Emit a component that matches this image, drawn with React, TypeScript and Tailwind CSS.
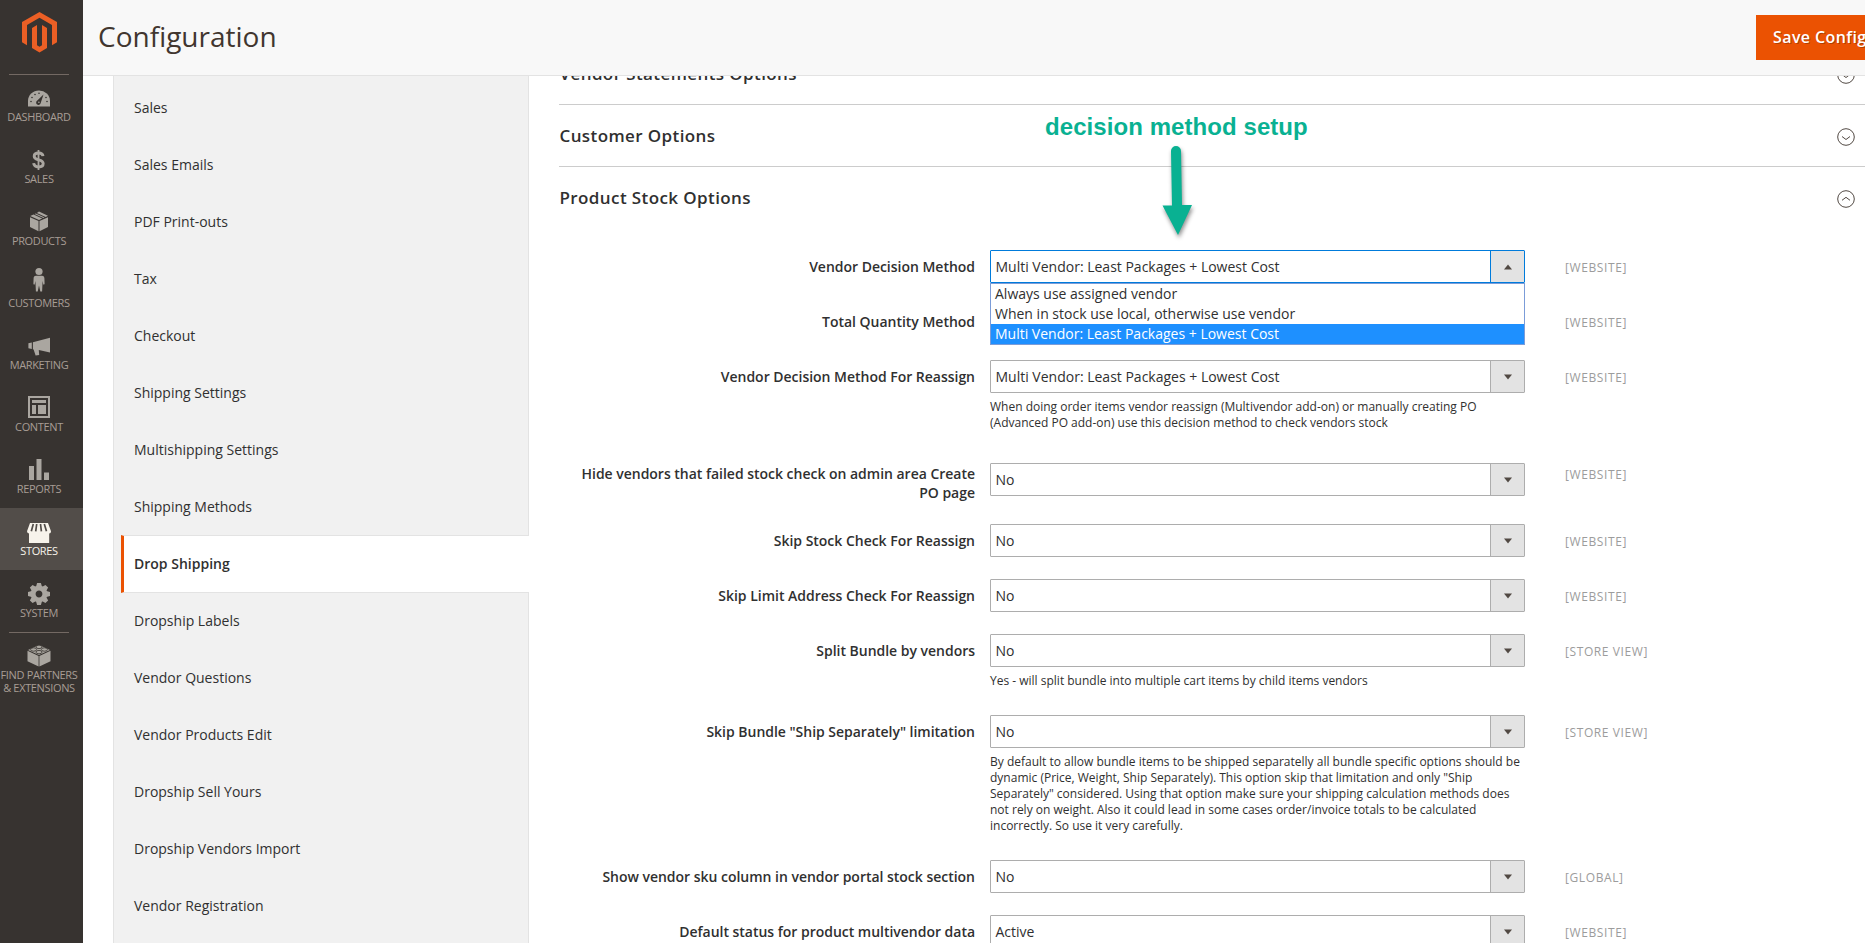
import { useState } from 'react'
import type { ReactNode } from 'react'
import { clsx } from 'clsx'

interface MenuItem {
  id: string
  label: ReactNode
  icon: ReactNode
}

interface Field {
  label: string
  value: string
  scope: string
  note?: string
  options?: string[]
}

const MENU: MenuItem[] = [
  {
    id: 'dashboard',
    label: 'Dashboard',
    icon: (
      <svg width="22" height="18" viewBox="0 2 22 18" fill="currentColor">
        <path d="M0 18.500V13a11 10.500 0 0 1 22 0v5.500z" />
        <g className="fill-[#373330]">
          <circle cx="3" cy="13.500" r=".8" />
          <circle cx="4" cy="9.500" r=".8" />
          <circle cx="7" cy="6.500" r=".8" />
          <circle cx="11" cy="5.300" r=".8" />
          <circle cx="18" cy="9.500" r=".8" />
          <circle cx="19" cy="13.500" r=".8" />
          <path d="M15.500 6.500 9.300 12.600a2.300 2.300 0 1 0 3.400 2.400z" />
        </g>
        <circle cx="10.900" cy="14.200" r=".8" />
      </svg>
    ),
  },
  {
    id: 'sales',
    label: 'Sales',
    icon: (
      <svg width="14" height="22" viewBox="0 0 14 22" fill="none" stroke="currentColor" className="-mt-0.5">
        <path d="M6.500 1v20" strokeWidth="1.800" />
        <path
          d="M11 7.200C10.800 5 9.200 4 6.600 4 4 4 2.200 5.200 2.200 7.200c0 2.300 2 3 4.500 3.600 2.700.6 4.500 1.400 4.500 3.800 0 2.200-2 3.400-4.600 3.400-2.800 0-4.700-1.200-4.900-3.800"
          strokeWidth="2.900"
        />
      </svg>
    ),
  },
  {
    id: 'products',
    label: 'Products',
    icon: (
      <svg width="20" height="21" viewBox="0 0 20 21" fill="currentColor" className="-mt-0.5">
        <path d="M1 6.200 9.500 10v10.300L1 16zM19 6.200 10.500 10v10.300L19 16z" />
        <path d="M1.200 5.100 4.600 3.500 13.200 7.600 10 9.100zM5.600 3 6.800 2.400 15.500 6.500 14.300 7.100zM7.900 1.900 10 .5l8.900 4.300-2.200 1.100z" />
      </svg>
    ),
  },
  {
    id: 'customers',
    label: 'Customers',
    icon: (
      <svg width="12" height="26" viewBox="0 0 12 26" fill="currentColor" className="-mt-2.5">
        <circle cx="6" cy="4.500" r="3.600" />
        <path d="M3 8.800h6c1.700 0 2.300 1 2.400 2.400l.2 5.600c0 1-1.200 1.200-1.400.1l-.6-3-.5 10.700H7.300L6 18.500l-1.300 6.100H2.900L2.400 13.900l-.6 3c-.2 1.100-1.500.9-1.400-.1l.2-5.600C.7 9.800 1.300 8.800 3 8.800z" />
      </svg>
    ),
  },
  {
    id: 'marketing',
    label: 'Marketing',
    icon: (
      <svg width="22" height="19" viewBox="0 0 22 19" fill="currentColor">
        <path d="M4.900 5.300 22 .7v14.900l-11.200-2.700.4 5-3.600.7-2-6-.7-.3zM.4 6.300 3.800 5.600V12L.4 11.200z" />
      </svg>
    ),
  },
  {
    id: 'content',
    label: 'Content',
    icon: (
      <svg width="22" height="22" viewBox="0 0 22 22" fill="currentColor" className="-mt-[3px]">
        <path d="M0 0h22v22H0zM2 2v18h18V2z" fillRule="evenodd" />
        <path d="M4 4h14v3H4zM4 9h4v9H4zM10 9h8v9h-8z" />
      </svg>
    ),
  },
  {
    id: 'reports',
    label: 'Reports',
    icon: (
      <svg width="20" height="21" viewBox="0 0 20 21" fill="currentColor" className="-mt-0.5">
        <path d="M0 7h5v14H0zM7.500 0h5v21h-5zM15 13.500h5V21h-5z" />
      </svg>
    ),
  },
  {
    id: 'stores',
    label: 'Stores',
    icon: (
      <svg width="24" height="20" viewBox="0 0 24 20" fill="currentColor">
        <path d="M3 0h18l3 8.200a2.300 2.300 0 0 1-1.800 2.300V20H2V10.500A2.300 2.300 0 0 1 0 8.200z" />
        <path
          d="M6.300 1 4.300 8.300M9.700 1 8.700 8.300M13.500 1l.9 7.300M17.300 1l2.200 7.300"
          className="stroke-[#524d49]"
          strokeWidth="1.700"
          fill="none"
        />
      </svg>
    ),
  },
  {
    id: 'system',
    label: 'System',
    icon: (
      <svg width="22" height="22" viewBox="-11 -11 22 22" className="-mt-0.5">
        <circle r="5.800" fill="none" stroke="currentColor" strokeWidth="4.800" />
        <g fill="currentColor">
          {[0, 45, 90, 135, 180, 225, 270, 315].map((angle) => (
            <path key={angle} d="M-3.200-6.500-1.900-11h3.800l1.300 4.500z" transform={`rotate(${angle})`} />
          ))}
        </g>
      </svg>
    ),
  },
  {
    id: 'partners',
    label: (
      <>
        Find Partners
        <br />
        &amp; Extensions
      </>
    ),
    icon: (
      <svg width="24" height="23" viewBox="0 0 24 23" fill="currentColor" className="-mt-0.5">
        <path d="M.5 6.800 11.600 12v10.500L.5 17.300zM23.500 6.800 12.400 12v10.500l11.100-5.200zM1 6 12 1l11 5-11 5z" />
        <g className="stroke-[#373330]" strokeWidth=".8">
          <ellipse cx="12" cy="2.900" rx="3" ry="1.700" />
          <ellipse cx="6.600" cy="5.500" rx="3" ry="1.700" />
          <ellipse cx="17.400" cy="5.500" rx="3" ry="1.700" />
          <ellipse cx="12" cy="8.100" rx="3" ry="1.700" />
        </g>
      </svg>
    ),
  },
]

const TABS = [
  'Sales',
  'Sales Emails',
  'PDF Print-outs',
  'Tax',
  'Checkout',
  'Shipping Settings',
  'Multishipping Settings',
  'Shipping Methods',
  'Drop Shipping',
  'Dropship Labels',
  'Vendor Questions',
  'Vendor Products Edit',
  'Dropship Sell Yours',
  'Dropship Vendors Import',
  'Vendor Registration',
]

const LEAST_PACKAGES = 'Multi Vendor: Least Packages + Lowest Cost'

const FIELDS: Field[] = [
  {
    label: 'Vendor Decision Method',
    value: LEAST_PACKAGES,
    scope: '[WEBSITE]',
    options: ['Always use assigned vendor', 'When in stock use local, otherwise use vendor', LEAST_PACKAGES],
  },
  { label: 'Total Quantity Method', value: '', scope: '[WEBSITE]' },
  {
    label: 'Vendor Decision Method For Reassign',
    value: LEAST_PACKAGES,
    scope: '[WEBSITE]',
    note: 'When doing order items vendor reassign (Multivendor add-on) or manually creating PO (Advanced PO add-on) use this decision method to check vendors stock',
  },
  { label: 'Hide vendors that failed stock check on admin area Create PO page', value: 'No', scope: '[WEBSITE]' },
  { label: 'Skip Stock Check For Reassign', value: 'No', scope: '[WEBSITE]' },
  { label: 'Skip Limit Address Check For Reassign', value: 'No', scope: '[WEBSITE]' },
  {
    label: 'Split Bundle by vendors',
    value: 'No',
    scope: '[STORE VIEW]',
    note: 'Yes - will split bundle into multiple cart items by child items vendors',
  },
  {
    label: 'Skip Bundle "Ship Separately" limitation',
    value: 'No',
    scope: '[STORE VIEW]',
    note: 'By default to allow bundle items to be shipped separatelly all bundle specific options should be dynamic (Price, Weight, Ship Separately). This option skip that limitation and only "Ship Separately" considered. Using that option make sure your shipping calculation methods does not rely on weight. Also it could lead in some cases order/invoice totals to be calculated incorrectly. So use it very carefully.',
  },
  { label: 'Show vendor sku column in vendor portal stock section', value: 'No', scope: '[GLOBAL]' },
  { label: 'Default status for product multivendor data', value: 'Active', scope: '[WEBSITE]' },
]

function Sidebar() {
  return (
    <aside className="w-[83px] shrink-0 bg-[#373330]">
      <div className="flex h-[74px] w-[79px] justify-center pt-[11.5px]">
        <svg width="35" height="41" viewBox="0 0 35 41" className="fill-[#eb5f25]">
          <path d="M17.500 0 35 10.100v20.200l-5 2.900V13L17.500 5.800 5 13v20.200l-5-2.900V10.100z" />
          <path d="M10 15.900 15 13v20.200l2.500 1.500 2.500-1.500V13l5 2.900v20.200l-7.500 4.400-7.500-4.400z" />
        </svg>
      </div>
      <nav>
        {MENU.map((item) => {
          const active = item.id === 'stores'
          return (
            <a
              key={item.id}
              className={clsx(
                'relative flex h-[62px] w-full flex-col pr-[5px]',
                active ? 'bg-[#524d49] text-[#f7f3eb]' : 'text-[#aaa6a0]',
              )}
            >
              {(item.id === 'dashboard' || item.id === 'partners') && (
                <span className="absolute top-0 left-[9px] h-px w-[60px] bg-[#736963]" />
              )}
              <span className="flex h-[36px] items-center justify-center pt-[13px]">{item.icon}</span>
              <span
                className={clsx(
                  'text-center text-[11px] leading-[13px] tracking-[-0.35px] whitespace-nowrap uppercase',
                  active ? 'text-[#f7f3eb]' : 'text-[#a79d95]',
                )}
              >
                {item.label}
              </span>
            </a>
          )
        })}
      </nav>
    </aside>
  )
}

function ConfigTabs() {
  return (
    <ul className="h-[867px] w-[416px] shrink-0 border-x border-[#e3e3e3] bg-[#f1f1f1] pt-[3px]">
      {TABS.map((tab) => (
        <li
          key={tab}
          className={clsx(
            '-mb-px flex h-[58px] items-center border-y pb-0.5 pl-[10px] text-[14px]',
            tab === 'Drop Shipping'
              ? 'relative -mr-px ml-[7px] border-l-[3px] border-y-[#e3e3e3] border-l-[#eb5202] bg-white font-semibold'
              : 'ml-[10px] border-transparent',
          )}
        >
          {tab}
        </li>
      ))}
    </ul>
  )
}

function SectionHeader({ title, open = false }: { title: string; open?: boolean }) {
  return (
    <div className={clsx('flex h-[62px] items-center border-b pr-[33px] pl-[0.5px]', open ? 'border-transparent' : 'border-[#cccccc]')}>
      <h2 className="text-[17px] font-semibold tracking-[0.4px]">{title}</h2>
      <svg width="18" height="18" viewBox="0 0 18 18" fill="none" stroke="#514943" className="mt-0.5 ml-auto">
        <circle cx="9" cy="9" r="8.300" />
        <path d={open ? 'M5 10.300 9 7.300l4 3' : 'M5 8.500 9 11.500l4-3'} />
      </svg>
    </div>
  )
}

function Select({ field }: { field: Field }) {
  const [open, setOpen] = useState(Boolean(field.options))

  return (
    <div className="relative">
      <button
        onClick={() => field.options && setOpen(!open)}
        className={clsx(
          'flex h-[33px] w-full rounded-[1px] border bg-white text-left text-[14px]',
          open ? 'border-[#007bdb]' : 'border-[#adadad]',
        )}
      >
        <span className="flex h-full flex-1 items-center pl-[4.5px]">{field.value}</span>
        <span
          className={clsx(
            'flex h-full w-[34px] items-center justify-center border-l bg-[#e3e3e3]',
            open ? 'border-[#007bdb]' : 'border-[#adadad]',
          )}
        >
          <svg width="8" height="6" viewBox="0 0 8 6" fill="#514943">
            <path d={open ? 'M0 5.500h8L4 .5z' : 'M0 .5h8L4 5.500z'} />
          </svg>
        </span>
      </button>
      {open && field.options && (
        <ul className="absolute top-full left-0 z-10 w-full border border-[#7b9cd8] bg-white text-[14px] leading-5">
          {field.options.map((option) => (
            <li
              key={option}
              className={clsx('h-5 pl-1', option === field.value && 'bg-[#1e90ff] text-white')}
            >
              {option}
            </li>
          ))}
        </ul>
      )}
    </div>
  )
}

function FieldRow({ field }: { field: Field }) {
  const tall = field.label.length > 60
  return (
    <div className={clsx('flex items-start', tall ? 'h-[67px]' : field.note ? 'pb-[26px]' : 'h-[55px]')}>
      <label className="w-[416px] pt-[7px] pl-[18px] text-right text-[14px] leading-[19px] font-semibold tracking-[-0.02px]">
        {field.label}
      </label>
      <div className={clsx('ml-[15px] w-[535px]', tall && 'pt-[6px]')}>
        <Select field={field} />
        {field.note && <p className="mt-[6px] text-[12px] leading-4">{field.note}</p>}
      </div>
      <span className="ml-[40px] pt-[8px] text-[12px] leading-[19px] tracking-[0.6px] text-[#9c9c9c]">
        {field.scope}
      </span>
    </div>
  )
}

function Annotation() {
  return (
    <div className="pointer-events-none absolute top-[113px] left-[1045px] z-20 w-[264px] text-[#09b192]">
      <p
        className="text-[24px] leading-7 font-bold tracking-[0.07px] whitespace-nowrap"
        style={{ fontFamily: '"Liberation Sans", Arial, sans-serif' }}
      >
        decision method setup
      </p>
      <svg
        width="50"
        height="104"
        viewBox="0 0 50 104"
        fill="currentColor"
        className="ml-[108px] overflow-visible drop-shadow-[1px_3px_2px_rgba(0,0,0,0.45)]"
      >
        <path d="M18 10a5 5 0 0 1 10 0l1 54H39L25 94 9.500 64.500H19z" />
      </svg>
    </div>
  )
}

export default function App() {
  return (
    <div
      className="relative flex h-[943px] w-full overflow-hidden bg-white text-[#303030]"
      style={{ fontFamily: '"Open Sans", "Noto Sans", sans-serif' }}
    >
      <Sidebar />
      <div className="min-w-0 flex-1">
        <header className="relative z-10 flex h-[76px] items-center border-b border-[#e3e3e3] bg-[#f8f8f8] pl-[15px]">
          <h1 className="pb-1 text-[28px] leading-none text-[#41362f]">Configuration</h1>
          <button className="-mr-[25px] ml-auto h-[45px] w-[134px] shrink-0 bg-[#eb5202] pb-px pl-[17px] text-left text-[16px] font-semibold tracking-[0.4px] whitespace-nowrap text-white [text-shadow:1px_1px_0_rgba(0,0,0,0.25)]">
            Save Config
          </button>
        </header>
        <div className="flex pl-[30px]">
          <ConfigTabs />
          <main className="-mt-[33px] -mr-[23px] ml-[30px] flex-1">
            <SectionHeader title="Vendor Statements Options" />
            <SectionHeader title="Customer Options" />
            <SectionHeader title="Product Stock Options" open />
            <div className="pt-[21px]">
              {FIELDS.map((field) => (
                <FieldRow key={field.label} field={field} />
              ))}
            </div>
          </main>
        </div>
      </div>
      <Annotation />
    </div>
  )
}
